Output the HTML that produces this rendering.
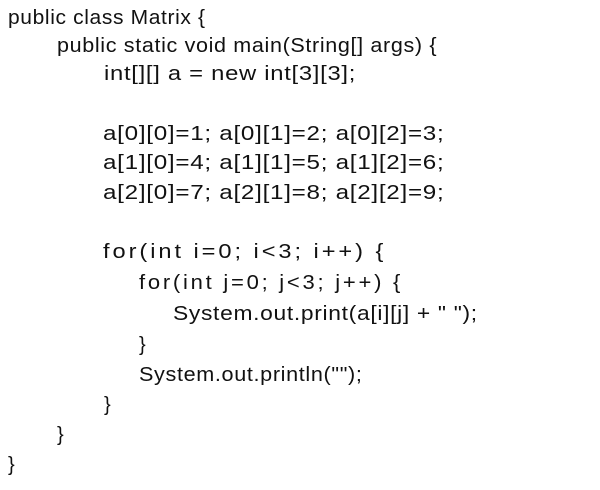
<!DOCTYPE html>
<html><head><meta charset="utf-8"><style>
body{margin:0;background:#fff;width:600px;height:490px;overflow:hidden}
div.l{position:absolute;font-family:"Liberation Sans","Noto Sans CJK JP",sans-serif;font-size:20px;line-height:30px;color:#111;white-space:pre;letter-spacing:0.6px;transform-origin:0 0}
</style></head><body>
<div class="l" style="left:8px;top:3px;transform:scaleX(1.05)">public class Matrix {</div>
<div class="l" style="left:57px;top:31px;transform:scaleX(1.077)">public static void main(String[] args) {</div>
<div class="l" style="left:104px;top:59px;transform:scaleX(1.19)">int[][] a = new int[3][3];</div>
<div class="l" style="left:103px;top:119px;transform:scaleX(1.21)">a[0][0]=1; a[0][1]=2; a[0][2]=3;</div>
<div class="l" style="left:103px;top:148px;transform:scaleX(1.21)">a[1][0]=4; a[1][1]=5; a[1][2]=6;</div>
<div class="l" style="left:103px;top:178px;transform:scaleX(1.21)">a[2][0]=7; a[2][1]=8; a[2][2]=9;</div>
<div class="l" style="left:103px;top:237px;letter-spacing:2.5px;transform:scaleX(1.18)">for(int i=0; i&lt;3; i++) {</div>
<div class="l" style="left:139px;top:268px;letter-spacing:2.5px;transform:scaleX(1.10)">for(int j=0; j&lt;3; j++) {</div>
<div class="l" style="left:173px;top:299px;transform:scaleX(1.14)">System.out.print(a[i][j] + " ");</div>
<div class="l" style="left:139px;top:330px">}</div>
<div class="l" style="left:139px;top:360px;transform:scaleX(1.08)">System.out.println("");</div>
<div class="l" style="left:104px;top:390px">}</div>
<div class="l" style="left:57px;top:420px">}</div>
<div class="l" style="left:8px;top:450px">}</div>
</body></html>
